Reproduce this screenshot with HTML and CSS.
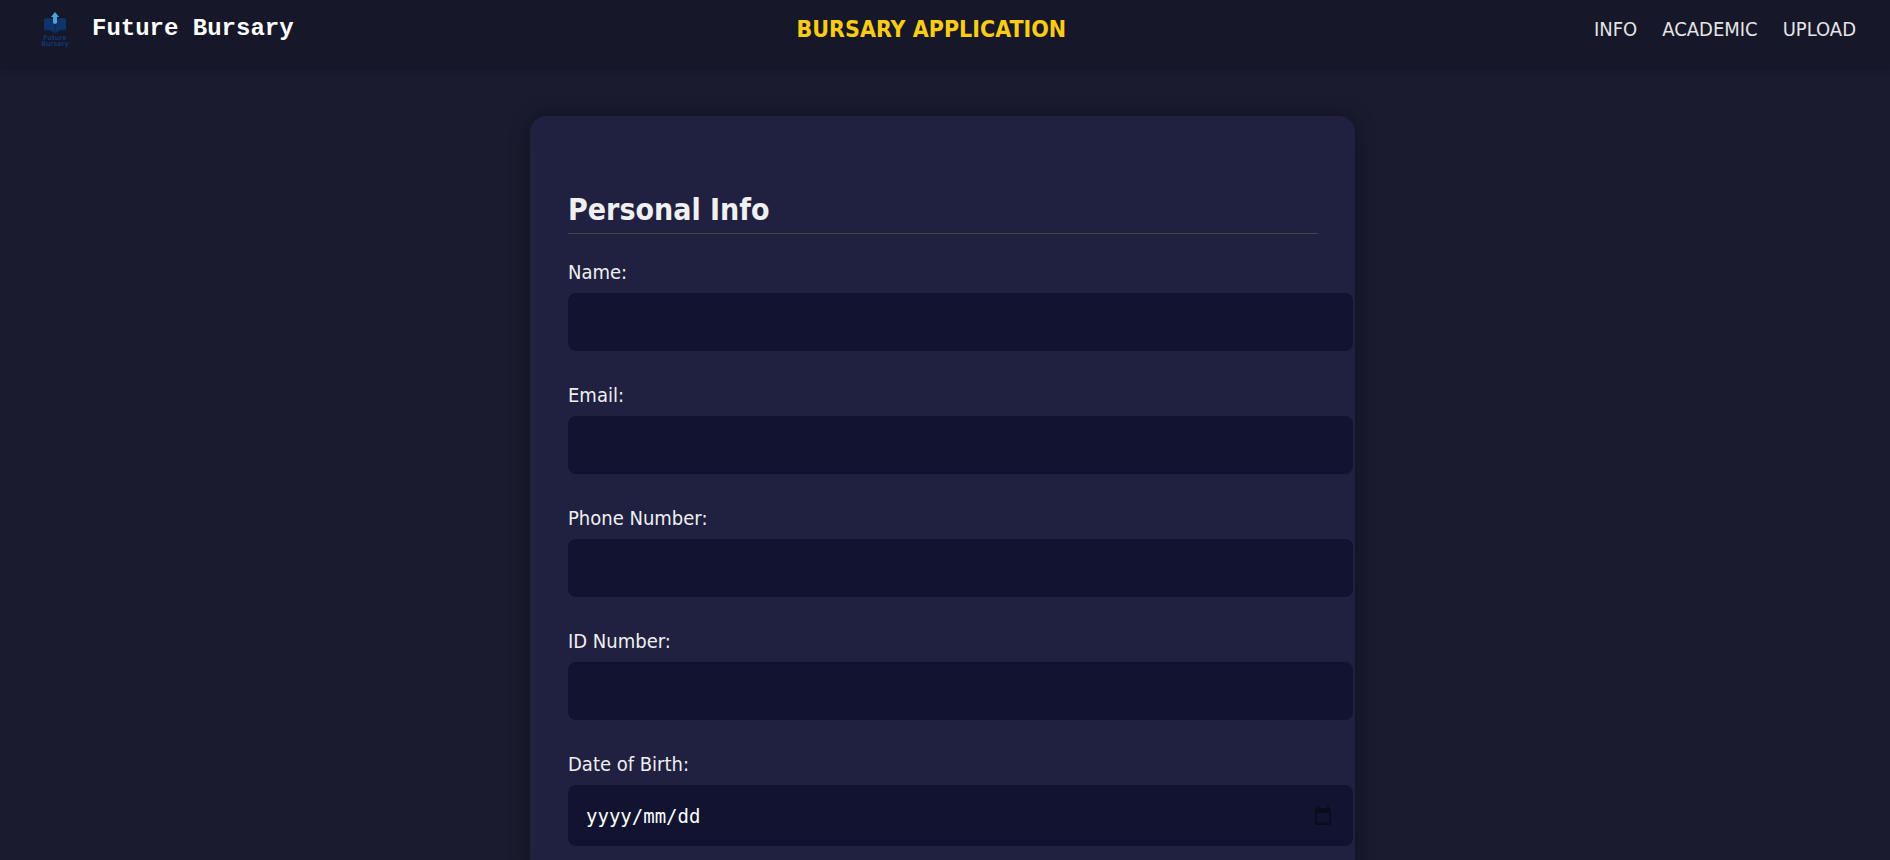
FILE: index.html
```html
<!DOCTYPE html>
<html lang="en">
<head>
<meta charset="utf-8">
<title>Future Bursary</title>
<link rel="stylesheet" href="styles.css">
</head>
<body>
<header class="topbar">
  <div class="brand">
    <svg class="logo" viewBox="0 0 30 40" aria-hidden="true">
      <path class="logo-book" d="M4 11c4-2 8-1 11 2 3-3 7-4 11-2v11c-4-1-8 0-11 3-3-3-7-4-11-3z"/>
      <path class="logo-fold" d="M15 13v12M4 23c4-1 8 0 11 3 3-3 7-4 11-3"/>
      <path class="logo-arrow" d="M15 4l4 5h-2v6l-2 1-2-1V9h-2z"/>
      <text class="logo-text" x="15" y="32">Future</text>
      <text class="logo-text" x="15" y="38">Bursary</text>
    </svg>
    <span class="brand-name">Future Bursary</span>
  </div>
  <div class="title">BURSARY APPLICATION</div>
  <nav class="nav">
    <a href="#info">INFO</a>
    <a href="#academic">ACADEMIC</a>
    <a href="#upload">UPLOAD</a>
  </nav>
</header>
<main class="page">
  <form class="card" id="info">
    <h2 class="heading">Personal Info</h2>
    <div class="field"><label for="name">Name:</label><input class="control" id="name" type="text"></div>
    <div class="field"><label for="email">Email:</label><input class="control" id="email" type="email"></div>
    <div class="field"><label for="phone">Phone Number:</label><input class="control" id="phone" type="tel"></div>
    <div class="field"><label for="idnum">ID Number:</label><input class="control" id="idnum" type="text"></div>
    <div class="field">
      <label for="dob">Date of Birth:</label>
      <div class="control date">
        <input class="date-input" id="dob" type="text" placeholder="yyyy/mm/dd">
        <button class="picker" type="button" aria-label="Open calendar">
          <svg viewBox="0 0 16 19" width="16" height="19" aria-hidden="true"><path fill-rule="evenodd" d="M2 0h2v2h8V0h2v2q2 0 2 2v13q0 2-2 2H2q-2 0-2-2V4q0-2 2-2zM2 7v9.500h12V7z"/></svg>
        </button>
      </div>
    </div>
  </form>
</main>
</body>
</html>
```
FILE: styles.css
```css
* {
  box-sizing: border-box;
}

body {
  margin: 0;
  background: #1a1b2e;
  color: #f0f0f0;
  font: 20px/28px "DejaVu Sans Condensed", "DejaVu Sans", sans-serif;
}

.topbar {
  display: flex;
  justify-content: space-between;
  align-items: flex-start;
  padding: 8px 34px 22px 40px;
  background: #161729;
  box-shadow: 0 2px 5px rgba(0, 0, 0, 0.1);
}

.brand {
  display: flex;
  gap: 22px;
}

.logo {
  width: 30px;
  height: 40px;
}

.logo-book {
  fill: #0f3469;
}

.logo-fold {
  fill: none;
  stroke: #0b2450;
}

.logo-arrow {
  fill: #4ba3dc;
}

.logo-text {
  fill: #12366b;
  font: bold 7px "DejaVu Sans Condensed", "DejaVu Sans", sans-serif;
  text-anchor: middle;
}

.brand-name {
  padding-top: 6px;
  color: #fff;
  font: bold 24px/30px "Liberation Mono", monospace;
}

.title {
  padding-top: 7px;
  color: #facc15;
  font-size: 23px;
  font-weight: bold;
}

.nav {
  display: flex;
  padding-top: 7px;
}

.nav a {
  margin-left: 25px;
  color: #e5e5e5;
  text-decoration: none;
}

.page {
  padding: 46px 5px 46px 0;
}

.card {
  display: grid;
  gap: 30px;
  width: min(825px, 100%);
  margin: 0 auto;
  padding: 76px 37px 38px 38px;
  border-radius: 16px;
  background: #202040;
  box-shadow: 0 0 20px rgba(0, 0, 0, 0.4);
}

.heading {
  margin: 0 0 -6px;
  padding-bottom: 5px;
  border-bottom: 1px solid #444;
  font-size: 30px;
  line-height: 36px;
}

.field {
  display: grid;
  gap: 7px;
  margin-right: -35px;
}

.control {
  width: 100%;
  height: 58px;
  padding: 0 18px;
  border: 0;
  border-radius: 8px;
  background: #121330;
  color: #fff;
  font: 19px "DejaVu Sans Mono", monospace;
}

.date {
  display: flex;
  align-items: center;
  height: 61px;
  padding-right: 22px;
}

.date-input {
  flex: 1;
  min-width: 0;
  padding: 0;
  border: 0;
  background: none;
  color: inherit;
  font: inherit;
}

.date-input::placeholder {
  color: #fff;
  opacity: 1;
}

.picker {
  display: flex;
  padding: 0;
  border: 0;
  background: none;
  fill: #0b0b1d;
}
```
